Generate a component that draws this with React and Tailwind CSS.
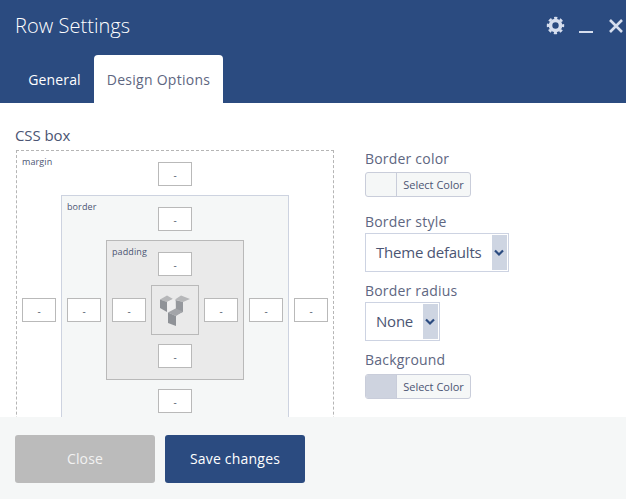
import React from 'react';

function ValueInput() {
  return (
    <div className="flex h-6 w-[34px] items-center justify-center border border-[#b9b9b9] bg-white pt-[2px] text-[10px] leading-none text-[#5a6070]">
      -
    </div>
  );
}

function BoxLayer({ label, className, hasBottom = true, children }) {
  return (
    <div className={`grid grid-cols-[44px_auto_44px] grid-rows-[44px_auto_44px] border ${className}`}>
      <div className="pl-[5px] pt-[4px] text-[9px] leading-[14px] tracking-[0.1px] whitespace-nowrap text-[#4b5573]">{label}</div>
      <div className="flex justify-center pt-[11px]"><ValueInput /></div>
      <div />
      <div className="flex items-center justify-center"><ValueInput /></div>
      {children}
      <div className="flex items-center justify-center"><ValueInput /></div>
      <div />
      <div className="flex justify-center pt-[9px]">{hasBottom && <ValueInput />}</div>
      <div />
    </div>
  );
}

function ComposerLogo() {
  return (
    <svg className="-mt-px" width="32" height="32" viewBox="0 0 32 32">
      <path d="M1 5.5 L8 1.5 L14 5 L8 8 Z" fill="#b6b7b9" />
      <path d="M1 5.5 L8 8 V18 L1 14 Z" fill="#8f9297" />
      <path d="M16 5.5 L22 1.5 L31 5 L24 8 Z" fill="#b6b7b9" />
      <path d="M16.5 6 L24 8 V18 L17 21 Z" fill="#95989d" />
      <path d="M8 8 L14 5 L16.5 7 V15 L9 18 Z" fill="#eeeeef" />
      <path d="M9 18.5 L16.5 14.5 L24 17.5 L17 22 Z" fill="#a3a5a9" />
      <path d="M9 18.5 L17 22 V32 L9 29 Z" fill="#8f9297" />
    </svg>
  );
}

function ColorButton({ swatch }) {
  return (
    <div className="flex h-[25px] w-[106px] overflow-hidden rounded-[3px] border border-[#c9cdda] bg-[#f5f7f7]">
      <div className={`w-[31px] border-r border-[#c9cdda] ${swatch}`} />
      <div className="flex-1 text-center text-[11px] leading-[24px] whitespace-nowrap text-[#4b5573]">Select Color</div>
    </div>
  );
}

function SelectBox({ value, className }) {
  return (
    <div className={`flex h-[39px] border border-[#cdd3e2] bg-white p-px pl-[10px] ${className}`}>
      <span className="flex-1 text-[15px] leading-[35px] tracking-[-0.22px] whitespace-nowrap text-[#4b5573]">{value}</span>
      <span className="flex w-[15px] items-center justify-center bg-[#ced5e2] pr-px">
        <svg className="shrink-0" width="10" height="8" viewBox="0 0 10 8" fill="none" stroke="#2b4b80" strokeWidth="2.2">
          <path d="M1 1.5 L5 5.5 L9 1.5" />
        </svg>
      </span>
    </div>
  );
}

function FieldLabel({ children }) {
  return <div className="h-[22px] text-[14px] leading-[22px] tracking-[0.2px] text-[#5e6681]">{children}</div>;
}

export default function App() {
  return (
    <div className="flex h-[499px] w-[626px] flex-col overflow-hidden bg-white font-['Open_Sans',sans-serif]">
      <header className="flex h-[103px] shrink-0 flex-col justify-between bg-[#2b4b80]">
        <div className="flex h-[52px] items-center justify-between pl-[15px] text-white">
          <h1 className="text-[20px] leading-[52px] font-light tracking-[0.05px]">Row Settings</h1>
          <svg width="80" height="52" viewBox="546 0 80 52" fill="none" stroke="#d6deee">
            <circle cx="555.5" cy="25.5" r="5" strokeWidth="3.6" />
            <circle cx="555.5" cy="25.5" r="7.5" strokeWidth="2.4" strokeDasharray="3.2 2.69" strokeDashoffset="1.6" />
            <path d="M579 32H593" strokeWidth="2" />
            <path d="M610 20L622 32M622 20L610 32" strokeWidth="2.6" />
          </svg>
        </div>
        <nav className="flex h-12 pl-[15px] text-[14px] leading-[50px]">
          <div className="w-[79px] text-center tracking-[0.15px] text-white">General</div>
          <div className="w-[129px] rounded-t-[4px] bg-white text-center tracking-[0.26px] text-[#5e6681]">Design Options</div>
        </nav>
      </header>

      <main className="flex h-[314px] shrink-0 overflow-hidden">
        <section className="ml-4 w-[318px] pt-[22px]">
          <h2 className="-ml-px h-[25px] text-[15px] leading-[21px] tracking-[-0.1px] text-[#4b5573]">CSS box</h2>
          <BoxLayer label="margin" hasBottom={false} className="border-dashed border-[#b5b5b5]">
            <BoxLayer label="border" className="border-[#cdd3e0] bg-[#f5f7f7]">
              <BoxLayer label="padding" className="border-[#b9b9b9] bg-[#eaeaea]">
                <div className="flex h-[50px] w-12 items-center justify-center border border-[#b9b9b9]">
                  <ComposerLogo />
                </div>
              </BoxLayer>
            </BoxLayer>
          </BoxLayer>
        </section>
        <section className="ml-[31px] pt-[45px]">
          <div className="h-[63px]">
            <FieldLabel>Border color</FieldLabel>
            <div className="pt-[2px]"><ColorButton swatch="" /></div>
          </div>
          <div className="h-[69px]">
            <FieldLabel>Border style</FieldLabel>
            <SelectBox value="Theme defaults" className="w-36" />
          </div>
          <div className="h-[69px]">
            <FieldLabel>Border radius</FieldLabel>
            <SelectBox value="None" className="w-[75px]" />
          </div>
          <FieldLabel>Background</FieldLabel>
          <div className="pt-[3px]"><ColorButton swatch="bg-[#ced3df]" /></div>
        </section>
      </main>

      <footer className="flex h-[82px] shrink-0 gap-[10px] bg-[#f5f7f7] pt-[18px] pl-[15px] text-[14px] leading-[48px] text-white">
        <button className="h-12 w-[140px] rounded-[3px] bg-[#bbbbbb] tracking-[0.15px] text-[#f2f2f2]">Close</button>
        <button className="h-12 w-[140px] rounded-[3px] bg-[#2b4b80] tracking-[0.2px]">Save changes</button>
      </footer>
    </div>
  );
}
